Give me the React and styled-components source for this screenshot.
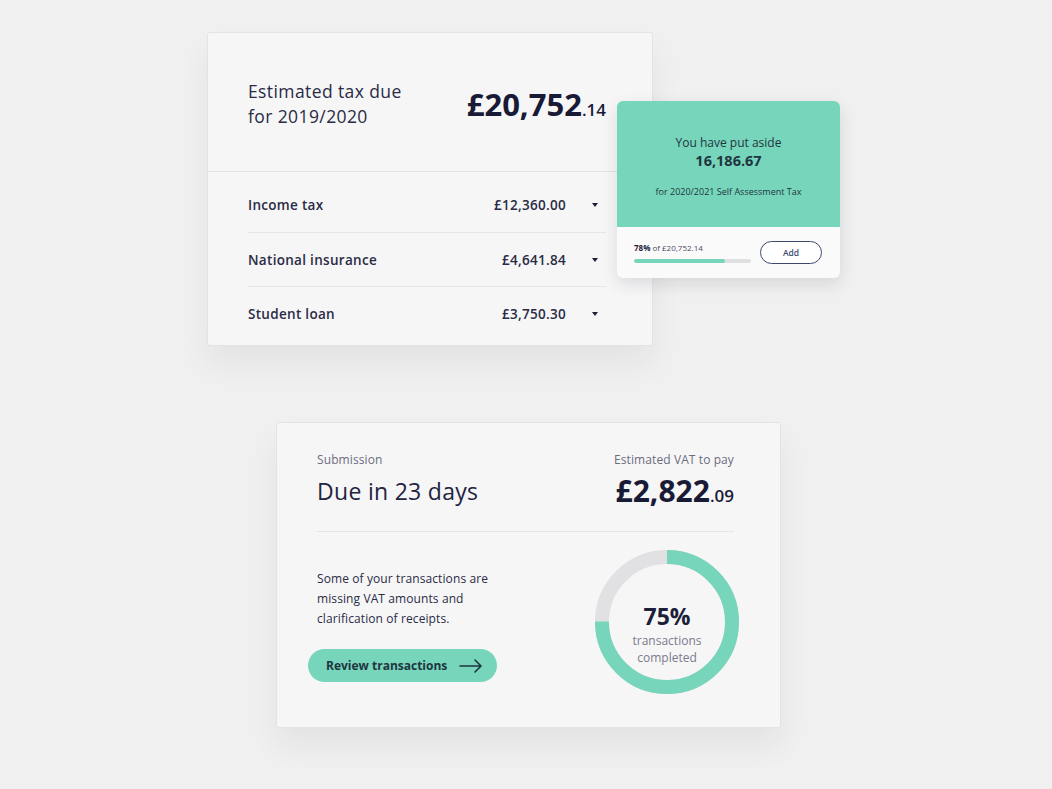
import styled, { createGlobalStyle } from "styled-components"

const GlobalStyle = createGlobalStyle`
  * { box-sizing: border-box; }
  body {
    margin: 0;
    background: #f0f0f0;
    font-family: "Open Sans", "Noto Sans", sans-serif;
    color: #1d1e3a;
  }
`

const Page = styled.div`
  min-height: 789px;
  padding: 32px 0 0 207px;
`

const TopArea = styled.div`
  position: relative;
  width: 446px;
`

const Card = styled.div`
  background: #f6f6f7;
  border: 1px solid #e3e3e5;
  border-radius: 3px;
  box-shadow: 0 18px 30px rgba(30, 30, 50, 0.06);
`

const TaxCard = styled(Card)`
  width: 446px;
  height: 314px;
`

const TaxHeader = styled.div`
  height: 139px;
  display: flex;
  align-items: center;
  justify-content: space-between;
  padding: 3px 46px 0 40px;
  border-bottom: 1px solid #e3e3e5;
`

const TaxTitle = styled.div`
  font-size: 17.5px;
  line-height: 25px;
  letter-spacing: 0.4px;
  color: #2a2b45;
`

const BigAmount = styled.div`
  font-size: ${p => p.size || 31}px;
  font-weight: 700;
  color: #191a36;

  small {
    font-size: ${p => Math.round((p.size || 31) * 0.55)}px;
    font-weight: 600;
  }
`

const RowList = styled.div`
  padding: 6px 46px 0 40px;
`

const Row = styled.div`
  height: 54px;
  display: flex;
  align-items: center;
  font-size: 13.5px;
  letter-spacing: 0.3px;
  font-weight: 600;
  color: #2a2b45;

  & + & {
    border-top: 1px solid #e6e6e8;
  }
`

const RowLabel = styled.span`
  flex: 1;
`

const Caret = styled.span`
  width: 0;
  height: 0;
  margin: 0 8px 0 26px;
  border-left: 3px solid transparent;
  border-right: 3px solid transparent;
  border-top: 4px solid #1d1e3a;
`

const SavingsCard = styled.div`
  position: absolute;
  left: 410px;
  top: 69px;
  width: 223px;
  border-radius: 6px;
  overflow: hidden;
  background: #fafafa;
  box-shadow: 0 6px 16px rgba(30, 30, 50, 0.12);
`

const SavingsTop = styled.div`
  height: 126px;
  background: #76d5bb;
  display: flex;
  flex-direction: column;
  align-items: center;
  padding-top: 33px;
  color: #1f3540;
`

const SavingsLabel = styled.div`
  font-size: 12px;
  font-weight: 500;
`

const SavingsValue = styled.div`
  font-size: 14.5px;
  font-weight: 700;
`

const SavingsNote = styled.div`
  font-size: 9px;
  font-weight: 500;
  margin-top: 15px;
`

const SavingsBottom = styled.div`
  height: 51px;
  display: flex;
  align-items: center;
  padding: 0 18px 0 17px;
  gap: 9px;
`

const Progress = styled.div`
  flex: 1;
  display: flex;
  flex-direction: column;
  gap: 6px;
  font-size: 8px;
  color: #4a4b60;

  b { color: #1d1e3a; }
`

const Track = styled.div`
  height: 4px;
  width: 117px;
  border-radius: 2px;
  background: #e0e0e2;
  overflow: hidden;
`

const Fill = styled.div`
  height: 100%;
  background: #76d5bb;
  border-radius: 2px;
`

const AddButton = styled.button`
  width: 62px;
  height: 23px;
  border: 1.5px solid #3c4a6e;
  border-radius: 12px;
  background: #fff;
  font-family: inherit;
  font-size: 8.5px;
  font-weight: 600;
  color: #3c4a6e;
  padding: 0;
`

const VatCard = styled(Card)`
  width: 505px;
  height: 306px;
  margin: 76px 0 0 69px;
  padding: 28px 46px 0 40px;
`

const VatHeader = styled.div`
  display: flex;
  justify-content: space-between;
  padding-bottom: 18px;
  border-bottom: 1px solid #e6e6e8;
`

const Stack = styled.div`
  display: flex;
  flex-direction: column;
  align-items: ${p => (p.end ? "flex-end" : "flex-start")};
  gap: 6px;
`

const SmallLabel = styled.div`
  font-size: 12px;
  letter-spacing: 0.1px;
  color: #6c6d80;
  font-weight: 500;
`

const DueText = styled.div`
  font-size: 23px;
  letter-spacing: 0.3px;
  color: #23243f;
  line-height: 34px;
`

const VatAmount = styled(BigAmount)`
  line-height: 34px;
`

const VatBody = styled.div`
  display: flex;
  justify-content: space-between;
  padding-top: 18px;
`

const VatLeft = styled.div`
  padding-top: 19px;
`

const Message = styled.p`
  margin: 0;
  width: 200px;
  font-size: 12px;
  letter-spacing: 0.1px;
  line-height: 20px;
  color: #2a2b45;
`

const ReviewButton = styled.button`
  margin: 20px 0 0 -9px;
  width: 189px;
  height: 33px;
  border: none;
  border-radius: 17px;
  background: #76d5bb;
  display: flex;
  align-items: center;
  justify-content: space-between;
  padding: 0 14px 0 18px;
  font-family: inherit;
  font-size: 12px;
  font-weight: 700;
  color: #1f3540;
`

const Donut = styled.div`
  position: relative;
  width: 144px;
  height: 144px;
  margin-right: -5px;
`

const DonutLabel = styled.div`
  position: absolute;
  inset: 0;
  display: flex;
  flex-direction: column;
  align-items: center;
  justify-content: center;
  padding-top: 22px;
`

const Percent = styled.div`
  font-size: 23px;
  font-weight: 700;
  color: #1d1e3a;
  line-height: 32px;
`

const DonutCaption = styled.div`
  font-size: 12px;
  line-height: 17px;
  color: #7a7b8c;
  text-align: center;
`

const rows = [
  ["Income tax", "£12,360.00"],
  ["National insurance", "£4,641.84"],
  ["Student loan", "£3,750.30"],
]

const Arrow = () => (
  <svg width="24" height="14" viewBox="0 0 24 14" fill="none" stroke="#1f3540" strokeWidth="1.6" strokeLinecap="round" strokeLinejoin="round">
    <path d="M1 7h21M16 1l6 6-6 6" />
  </svg>
)

const Ring = ({ value }) => {
  const r = 65
  const c = 2 * Math.PI * r
  return (
    <svg width="144" height="144" viewBox="0 0 144 144">
      <circle cx="72" cy="72" r={r} fill="none" stroke="#e1e1e3" strokeWidth="14" />
      <circle
        cx="72"
        cy="72"
        r={r}
        fill="none"
        stroke="#76d5bb"
        strokeWidth="14"
        strokeDasharray={`${c * value} ${c}`}
        transform="rotate(-90 72 72)"
      />
    </svg>
  )
}

const App = () => {
  return (
    <>
      <GlobalStyle />
      <Page>
        <TopArea>
          <TaxCard>
            <TaxHeader>
              <TaxTitle>Estimated tax due<br />for 2019/2020</TaxTitle>
              <BigAmount>£20,752<small>.14</small></BigAmount>
            </TaxHeader>
            <RowList>
              {rows.map(([label, amount]) => (
                <Row key={label}>
                  <RowLabel>{label}</RowLabel>
                  <span>{amount}</span>
                  <Caret />
                </Row>
              ))}
            </RowList>
          </TaxCard>
          <SavingsCard>
            <SavingsTop>
              <SavingsLabel>You have put aside</SavingsLabel>
              <SavingsValue>16,186.67</SavingsValue>
              <SavingsNote>for 2020/2021 Self Assessment Tax</SavingsNote>
            </SavingsTop>
            <SavingsBottom>
              <Progress>
                <div><b>78%</b> of £20,752.14</div>
                <Track><Fill style={{ width: "78%" }} /></Track>
              </Progress>
              <AddButton>Add</AddButton>
            </SavingsBottom>
          </SavingsCard>
        </TopArea>

        <VatCard>
          <VatHeader>
            <Stack>
              <SmallLabel>Submission</SmallLabel>
              <DueText>Due in 23 days</DueText>
            </Stack>
            <Stack end>
              <SmallLabel>Estimated VAT to pay</SmallLabel>
              <VatAmount size={30}>£2,822<small>.09</small></VatAmount>
            </Stack>
          </VatHeader>
          <VatBody>
            <VatLeft>
              <Message>Some of your transactions are missing VAT amounts and clarification of receipts.</Message>
              <ReviewButton>Review transactions <Arrow /></ReviewButton>
            </VatLeft>
            <Donut>
              <Ring value={0.75} />
              <DonutLabel>
                <Percent>75%</Percent>
                <DonutCaption>transactions<br />completed</DonutCaption>
              </DonutLabel>
            </Donut>
          </VatBody>
        </VatCard>
      </Page>
    </>
  )
}

export default App
